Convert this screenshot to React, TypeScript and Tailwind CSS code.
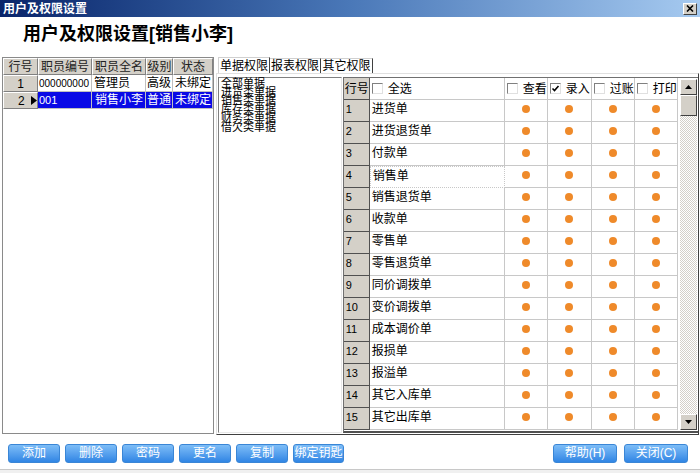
import React from "react";

const font = { fontFamily: '"Liberation Sans", "Noto Sans CJK SC", sans-serif' };

const docs = [
  "进货单", "进货退货单", "付款单", "销售单", "销售退货单", "收款单", "零售单", "零售退货单",
  "同价调拨单", "变价调拨单", "成本调价单", "报损单", "报溢单", "其它入库单", "其它出库单",
];

function Dot() {
  return <span className="block w-[8px] h-[8px] rounded-full bg-[#ef8a2a] mt-[5px]" />;
}

function Check({ checked }: { checked?: boolean }) {
  return (
    <span className="inline-flex items-center justify-center w-[11px] h-[11px] bg-white border-t border-l border-[#808080] border-r border-b border-r-[#e0e0e0] border-b-[#e0e0e0] mr-[5px] shrink-0">
      {checked && (
        <svg width="9" height="9" viewBox="0 0 9 9">
          <path d="M1.5 4.5 L3.5 6.5 L7.5 2" stroke="#000" strokeWidth="1.6" fill="none" />
        </svg>
      )}
    </span>
  );
}

function BlueBtn({ label, w }: { label: string; w: string }) {
  return (
    <div
      className={`${w} h-[19px] rounded-[3px] bg-gradient-to-b from-[#7dbdf7] to-[#2f85e4] border border-[#3a86d6] text-white text-[12px] flex items-center justify-center`}
    >
      {label}
    </div>
  );
}

export default function App() {
  return (
    <div className="w-[700px] h-[473px] bg-white flex flex-col overflow-hidden text-[12px] text-black" style={font}>
      {/* title bar */}
      <div className="h-[17px] shrink-0 bg-gradient-to-r from-[#0a246a] via-[#4a78b8] to-[#a6caf0] flex items-center justify-between pl-[3px] pr-[3px]">
        <span className="text-white font-bold text-[12px] leading-none">用户及权限设置</span>
        <span className="w-[14px] h-[12px] bg-[#d4d0c8] border-t border-l border-white border-r border-b border-r-[#404040] border-b-[#404040] flex items-center justify-center">
          <svg width="8" height="7" viewBox="0 0 8 7">
            <path d="M1 0.5 L7 6.5 M7 0.5 L1 6.5" stroke="#000" strokeWidth="1.6" />
          </svg>
        </span>
      </div>

      {/* heading */}
      <div className="h-[40px] shrink-0 pl-[23px] pb-[6px] flex items-center">
        <span className="text-[18px] font-bold leading-none">用户及权限设置[销售小李]</span>
      </div>

      {/* main */}
      <div className="h-[378px] shrink-0 flex pl-[2px]">
        {/* left table */}
        <div className="w-[212px] h-[377px] border border-[#8a8a8a] bg-white flex flex-col">
          <div className="flex h-[17px] bg-[#d4d0c8] text-[#222]">
            {[
              ["行号", "w-[35px]"],
              ["职员编号", "w-[54px]"],
              ["职员全名", "w-[54px]"],
              ["级别", "w-[27px]"],
              ["状态", "w-[40px]"],
            ].map(([t, w]) => (
              <div key={t} className={`${w} flex items-center justify-center border-t border-l border-white border-r border-b border-r-[#808080] border-b-[#808080]`}>
                {t}
              </div>
            ))}
          </div>
          <div className="flex h-[17px]">
            <div className="w-[35px] bg-[#d4d0c8] flex items-center justify-center border-t border-l border-white border-r border-b border-r-[#808080] border-b-[#808080]">1</div>
            <div className="w-[54px] flex items-center pl-[1px] border-r border-b border-[#c0c0c0] text-[10px]">000000000</div>
            <div className="w-[54px] flex items-center pl-[2px] border-r border-b border-[#c0c0c0]">管理员</div>
            <div className="w-[27px] flex items-center pl-[1px] border-r border-b border-[#c0c0c0]">高级</div>
            <div className="w-[40px] flex items-center pl-[2px] border-r border-b border-[#c0c0c0]">未绑定</div>
          </div>
          <div className="flex h-[17px]">
            <div className="w-[35px] bg-[#d4d0c8] flex items-center pl-[14px] gap-[6px] border-t border-l border-white border-r border-b border-r-[#808080] border-b-[#808080]">
              <span>2</span>
              <svg width="6" height="9" viewBox="0 0 6 9"><path d="M0 0 L6 4.5 L0 9 Z" fill="#000" /></svg>
            </div>
            <div className="w-[54px] flex items-center pl-[1px] bg-[#0a0ae6] text-white border-r border-b border-[#c0c0c0] text-[11px]">001</div>
            <div className="w-[54px] flex items-center pl-[3px] bg-[#0a0ae6] text-white border-r border-b border-[#c0c0c0]">销售小李</div>
            <div className="w-[27px] flex items-center pl-[1px] bg-[#0a0ae6] text-white border-r border-b border-[#c0c0c0]">普通</div>
            <div className="w-[40px] flex items-center pl-[2px] bg-[#0a0ae6] text-white border-r border-b border-[#c0c0c0]">未绑定</div>
          </div>
        </div>

        {/* right: tabs */}
        <div className="ml-[2px] w-[483px] flex flex-col">
          <div className="h-[16px] flex items-end pl-[2px]">
            <div className="w-[52px] h-[16px] bg-white border-t border-l border-[#d0d0d0] border-r border-r-[#404040] flex items-center justify-center relative z-10">单据权限</div>
            <div className="w-[51px] h-[15px] bg-white border-t border-[#d0d0d0] border-r border-r-[#404040] flex items-center justify-center">报表权限</div>
            <div className="w-[52px] h-[15px] bg-white border-t border-[#d0d0d0] border-r border-r-[#404040] flex items-center justify-center">其它权限</div>
          </div>
          <div className="h-[362px] border-t border-l border-[#e0e0e0] border-r border-b border-r-[#404040] border-b-[#404040] flex pt-[3px] pl-[1px] pr-[0px]">
            {/* tree */}
            <div className="w-[124px] h-[356px] border-t border-l border-[#808080] border-r border-b border-r-[#e8e8e8] border-b-[#e8e8e8] bg-white pl-[2px] pt-[1px] leading-[8.7px] text-[11px]">
              <div>全部单据</div>
              <div>进货类单据</div>
              <div>销售类单据</div>
              <div>库存类单据</div>
              <div>财务类单据</div>
              <div>借欠类单据</div>
            </div>
            {/* grid */}
            <div className="ml-[1px] w-[356px] h-[356px] border border-[#707070] border-r-0 border-b-2 border-b-[#505050] bg-white flex">
              <div className="w-[334px] flex flex-col">
                <div className="h-[22px] flex shrink-0">
                  <div className="w-[26px] bg-[#d4d0c8] border-r border-b border-[#505050] flex items-start pl-[1px] pt-[2px]">行号</div>
                  <div className="w-[135px] border-r border-b border-[#c8c8c8] flex items-center pl-[2px]"><Check />全选</div>
                  <div className="w-[43px] border-r border-b border-[#c8c8c8] flex items-center pl-[2px]"><Check />查看</div>
                  <div className="w-[44px] border-r border-b border-[#c8c8c8] flex items-center pl-[2px]"><Check checked />录入</div>
                  <div className="w-[43px] border-r border-b border-[#c8c8c8] flex items-center pl-[2px]"><Check />过账</div>
                  <div className="w-[43px] border-r border-b border-[#c8c8c8] flex items-center pl-[2px]"><Check />打印</div>
                </div>
                {docs.map((d, i) => (
                  <div key={d} className="h-[22px] flex shrink-0">
                    <div className="w-[26px] bg-[#d4d0c8] border-r border-b border-[#505050] pl-[2px] pt-[3px] text-[11px] leading-[12px]">{i + 1}</div>
                    <div className={`w-[135px] border-b border-r border-[#c8c8c8] pl-[2px] pt-[2px] leading-[14px] ${i === 3 ? "border border-dotted border-[#404040]" : ""}`}>{d}</div>
                    {[43, 44, 43, 43].map((w, j) => (
                      <div
                        key={j}
                        className={`${w === 44 ? "w-[44px]" : "w-[43px]"} border-r border-b border-[#c8c8c8] flex justify-center`}
                      >
                        <Dot />
                      </div>
                    ))}
                  </div>
                ))}
              </div>
              {/* scrollbar */}
              <div className="ml-[2px] w-[17px] flex flex-col bg-[repeating-conic-gradient(#d4d0c8_0%_25%,#ffffff_0%_50%)] bg-[length:2px_2px] mt-[1px] mb-[1px]">
                <div className="h-[16px] bg-[#d4d0c8] border-t border-l border-white border-r border-b border-r-[#404040] border-b-[#404040] flex items-center justify-center">
                  <svg width="7" height="4" viewBox="0 0 7 4"><path d="M0 4 L3.5 0 L7 4 Z" fill="#000" /></svg>
                </div>
                <div className="h-[21px] bg-[#d4d0c8] border-t border-l border-white border-r border-b border-r-[#404040] border-b-[#404040]" />
                <div className="flex-1" />
                <div className="h-[16px] bg-[#d4d0c8] border-t border-l border-white border-r border-b border-r-[#404040] border-b-[#404040] flex items-center justify-center">
                  <svg width="7" height="4" viewBox="0 0 7 4"><path d="M0 0 L3.5 4 L7 0 Z" fill="#000" /></svg>
                </div>
              </div>
            </div>
          </div>
        </div>
      </div>

      {/* buttons */}
      <div className="h-[34px] shrink-0 flex items-center justify-between pl-[8px] pr-[12px] pt-[2px]">
        <div className="flex gap-[5px]">
          <BlueBtn label="添加" w="w-[52px]" />
          <BlueBtn label="删除" w="w-[52px]" />
          <BlueBtn label="密码" w="w-[52px]" />
          <BlueBtn label="更名" w="w-[52px]" />
          <BlueBtn label="复制" w="w-[52px]" />
          <BlueBtn label="绑定钥匙" w="w-[51px]" />
        </div>
        <div className="flex gap-[7px]">
          <BlueBtn label="帮助(H)" w="w-[64px]" />
          <BlueBtn label="关闭(C)" w="w-[64px]" />
        </div>
      </div>
      <div className="flex-1 border-t border-[#c8c8c8] bg-[#f0f0f0]" />
    </div>
  );
}
